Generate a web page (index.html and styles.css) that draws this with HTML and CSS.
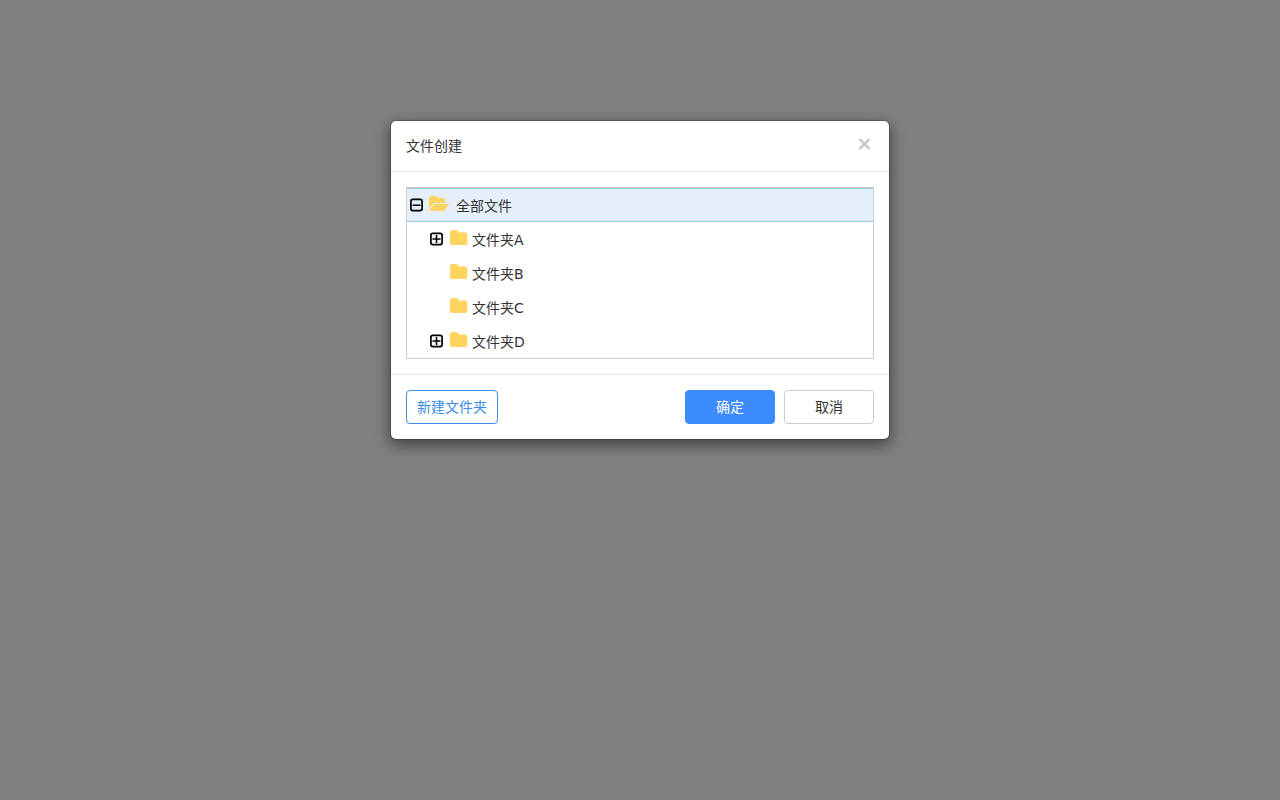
FILE: index.html
```html
<!DOCTYPE html>
<html lang="zh-CN">
<head>
<meta charset="utf-8">
<title>文件创建</title>
<link rel="stylesheet" href="styles.css">
</head>
<body>
<svg class="sprite" aria-hidden="true">
  <symbol id="icon-minus" viewBox="0 0 14 14">
    <rect x="1.900" y="1.400" width="11.200" height="11.200" rx="2" fill="none" stroke="#000" stroke-width="1.700"/>
    <path d="M3.500 7.200h8" stroke="#000" stroke-width="1.500"/>
  </symbol>
  <symbol id="icon-plus" viewBox="0 0 14 14">
    <rect x="1.900" y="1.400" width="11.200" height="11.200" rx="2" fill="none" stroke="#000" stroke-width="1.700"/>
    <path d="M3.500 7h8M7.500 3v8" stroke="#000" stroke-width="1.600"/>
  </symbol>
  <symbol id="icon-folder" viewBox="0 0 20 18">
    <path d="M1 3.6Q1 1 3.6 1h3.2Q9.4 1 9.4 3.4h6.4Q18.4 3.4 18.4 6v7.4Q18.4 16 15.8 16H3.6Q1 16 1 13.4z" fill="#ffd55f"/>
  </symbol>
  <symbol id="icon-folder-open" viewBox="0 0 20 18">
    <path d="M0 3.3Q0 1 2.3 1h4Q8.6 1 8.6 3.1h5.6Q16.3 3.1 16.3 5.2V8H6.2Q4.7 8 3.7 9.2L0 13.7z" fill="#ffd55f"/>
    <path d="M6.3 8.9h12.8q1.2 0 .5 1l-3.8 5Q15 16 13.6 16H1.2q-1.3 0-.5-1L4.6 9.8Q5.3 8.9 6.3 8.9z" fill="#ffd55f"/>
  </symbol>
</svg>
<div class="backdrop">
  <section class="modal" role="dialog" aria-modal="true" aria-labelledby="modal-title">
    <header class="modal-header">
      <h1 class="modal-title" id="modal-title">文件创建</h1>
      <button class="close" type="button" aria-label="关闭">
        <svg class="close-icon" viewBox="0 0 18 16"><path d="M3.500 3l10 10M13.500 3l-10 10" stroke="#ccc" stroke-width="2.600"/></svg>
      </button>
    </header>
    <div class="modal-body">
      <ul class="tree" role="tree">
        <li class="node root selected" role="treeitem" aria-expanded="true">
          <button class="toggle" type="button" aria-label="收起"><svg class="toggle-icon"><use href="#icon-minus"/></svg></button>
          <svg class="folder"><use href="#icon-folder-open"/></svg>
          <span class="name">全部文件</span>
        </li>
        <li class="node" role="treeitem" aria-expanded="false">
          <button class="toggle" type="button" aria-label="展开"><svg class="toggle-icon"><use href="#icon-plus"/></svg></button>
          <svg class="folder"><use href="#icon-folder"/></svg>
          <span class="name">文件夹A</span>
        </li>
        <li class="node" role="treeitem">
          <span class="toggle"></span>
          <svg class="folder"><use href="#icon-folder"/></svg>
          <span class="name">文件夹B</span>
        </li>
        <li class="node" role="treeitem">
          <span class="toggle"></span>
          <svg class="folder"><use href="#icon-folder"/></svg>
          <span class="name">文件夹C</span>
        </li>
        <li class="node" role="treeitem" aria-expanded="false">
          <button class="toggle" type="button" aria-label="展开"><svg class="toggle-icon"><use href="#icon-plus"/></svg></button>
          <svg class="folder"><use href="#icon-folder"/></svg>
          <span class="name">文件夹D</span>
        </li>
      </ul>
    </div>
    <footer class="modal-footer">
      <button class="btn btn-outline" type="button">新建文件夹</button>
      <div class="actions">
        <button class="btn btn-primary" type="button">确定</button>
        <button class="btn btn-default" type="button">取消</button>
      </div>
    </footer>
  </section>
</div>
</body>
</html>
```

FILE: styles.css
```css
* {
  box-sizing: border-box;
}

body {
  margin: 0;
  background: #808080;
  color: #333;
  font: 14px/20px "DejaVu Sans", "Noto Sans CJK SC", sans-serif;
}

.sprite {
  display: none;
}

.backdrop {
  min-height: 100vh;
  padding: 120px 16px 16px;
}

.modal {
  max-width: 500px;
  margin: 0 auto;
  background: #fff;
  background-clip: padding-box;
  border: 1px solid rgba(0, 0, 0, 0.2);
  border-radius: 6px;
  box-shadow: 0 5px 15px rgba(0, 0, 0, 0.5);
}

.modal-header {
  display: flex;
  justify-content: space-between;
  align-items: flex-start;
  padding: 15px;
  border-bottom: 1px solid #e5e5e5;
}

.modal-title {
  margin: 0;
  font-size: 14px;
  font-weight: 400;
  line-height: 20px;
}

.close,
.toggle {
  display: block;
  padding: 0;
  border: 0;
  background: none;
  cursor: pointer;
}

.close-icon {
  display: block;
  width: 18px;
  height: 16px;
}

.modal-body {
  padding: 15px;
}

.tree {
  margin: 0;
  padding: 0;
  list-style: none;
  border: 1px solid #ccc;
}

.node {
  display: flex;
  align-items: center;
  height: 34px;
  padding-left: 22px;
}

.node.root {
  padding-left: 2px;
}

.node.selected {
  background: #e4eff9;
  border-top: 1px solid #9acbe5;
  border-bottom: 1px solid #9acbe5;
}

.toggle {
  width: 14px;
  height: 14px;
  margin-right: 6px;
}

.toggle-icon {
  display: block;
  width: 14px;
  height: 14px;
}

.folder {
  width: 20px;
  height: 18px;
  margin-bottom: 2px;
}

.name {
  padding: 2px 0 0 3px;
}

.root .name {
  padding-left: 7px;
}

.modal-footer {
  display: flex;
  justify-content: space-between;
  padding: 15px;
  border-top: 1px solid #e5e5e5;
}

.actions {
  display: flex;
  gap: 9px;
}

.btn {
  height: 34px;
  padding: 0 10px;
  border: 1px solid #ccc;
  border-radius: 4px;
  background: #fff;
  color: #333;
  font: inherit;
  cursor: pointer;
}

.actions .btn {
  min-width: 90px;
}

.btn-outline {
  border-color: #3c8be0;
  color: #3c8be0;
}

.btn-primary {
  border-color: #3c8cff;
  background: #3c8cff;
  color: #fff;
}
```
